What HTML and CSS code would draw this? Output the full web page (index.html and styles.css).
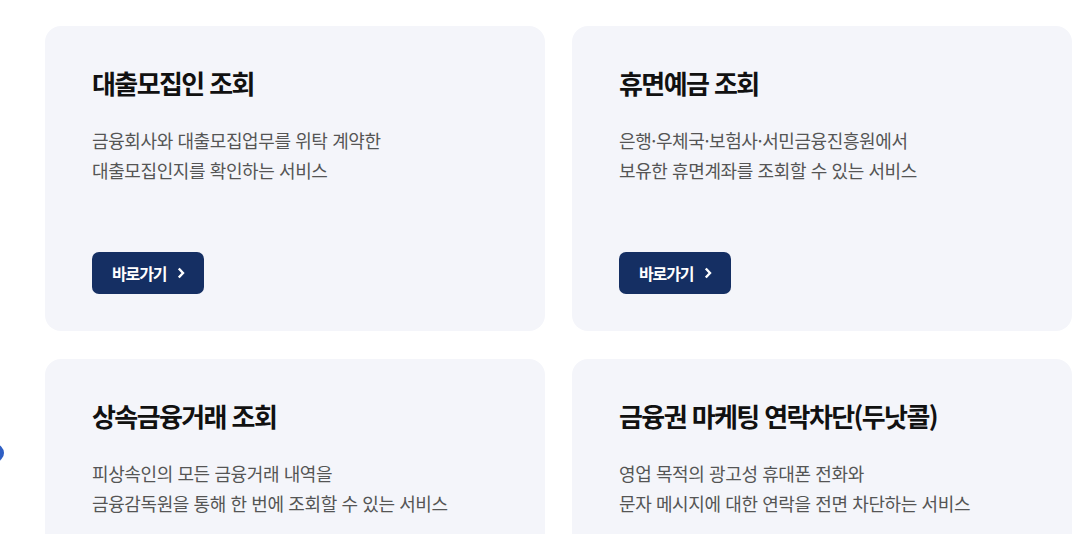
FILE: index.html
```html
<!DOCTYPE html>
<html lang="ko">
<head>
  <meta charset="UTF-8">
  <title>조회 서비스</title>
  <meta name="viewport" content="width=device-width, initial-scale=1.0">
  <link rel="stylesheet" href="styles.css">
</head>
<body>
  <span class="float-dot"></span>

  <div class="service-grid">
    <div class="service-card">
      <h2 class="card-title">대출모집인 조회</h2>
      <p class="card-desc">금융회사와 대출모집업무를 위탁 계약한<br>대출모집인지를 확인하는 서비스</p>
      <a class="go-btn" href="#">바로가기
        <svg width="8" height="12" viewBox="0 0 8 12"><path d="M1.8 1.5 L6 6 L1.8 10.5" fill="none" stroke="#fff" stroke-width="2.4"/></svg>
      </a>
    </div>

    <div class="service-card">
      <h2 class="card-title">휴면예금 조회</h2>
      <p class="card-desc">은행·우체국·보험사·서민금융진흥원에서<br>보유한 휴면계좌를 조회할 수 있는 서비스</p>
      <a class="go-btn" href="#">바로가기
        <svg width="8" height="12" viewBox="0 0 8 12"><path d="M1.8 1.5 L6 6 L1.8 10.5" fill="none" stroke="#fff" stroke-width="2.4"/></svg>
      </a>
    </div>

    <div class="service-card">
      <h2 class="card-title">상속금융거래 조회</h2>
      <p class="card-desc">피상속인의 모든 금융거래 내역을<br>금융감독원을 통해 한 번에 조회할 수 있는 서비스</p>
      <a class="go-btn" href="#">바로가기
        <svg width="8" height="12" viewBox="0 0 8 12"><path d="M1.8 1.5 L6 6 L1.8 10.5" fill="none" stroke="#fff" stroke-width="2.4"/></svg>
      </a>
    </div>

    <div class="service-card">
      <h2 class="card-title">금융권 마케팅 연락차단(두낫콜)</h2>
      <p class="card-desc">영업 목적의 광고성 휴대폰 전화와<br>문자 메시지에 대한 연락을 전면 차단하는 서비스</p>
      <a class="go-btn" href="#">바로가기
        <svg width="8" height="12" viewBox="0 0 8 12"><path d="M1.8 1.5 L6 6 L1.8 10.5" fill="none" stroke="#fff" stroke-width="2.4"/></svg>
      </a>
    </div>
  </div>
</body>
</html>
```

FILE: styles.css
```css
html, body {
  margin: 0;
  height: 100%;
  background: #ffffff;
  font-family: "Noto Sans CJK KR", "Noto Sans", sans-serif;
  overflow: hidden;
}

.float-dot {
  position: absolute;
  left: -14px;
  top: 444px;
  width: 18px;
  height: 18px;
  border-radius: 50%;
  background: #2f5fc4;
}

.service-grid {
  display: grid;
  grid-template-columns: 500px 500px;
  grid-auto-rows: 305px;
  gap: 28px 27px;
  padding: 26px 0 0 45px;
}

.service-card {
  display: flex;
  flex-direction: column;
  align-items: flex-start;
  box-sizing: border-box;
  padding: 39px 46px 37px 47px;
  background: #f4f5fa;
  border-radius: 16px;
}

.card-title {
  margin: 0;
  font-size: 26px;
  line-height: 36px;
  font-weight: 700;
  letter-spacing: -1.6px;
  color: #111111;
}

.card-desc {
  margin: 24px 0 0;
  font-size: 18px;
  line-height: 30px;
  letter-spacing: -0.4px;
  color: #555555;
}

.go-btn {
  margin-top: auto;
  display: flex;
  align-items: center;
  gap: 11px;
  height: 42px;
  box-sizing: border-box;
  padding: 0 19px 0 20px;
  background: #152f63;
  border-radius: 7px;
  color: #ffffff;
  font-size: 16px;
  font-weight: 700;
  letter-spacing: -1.1px;
  text-decoration: none;
}
```
